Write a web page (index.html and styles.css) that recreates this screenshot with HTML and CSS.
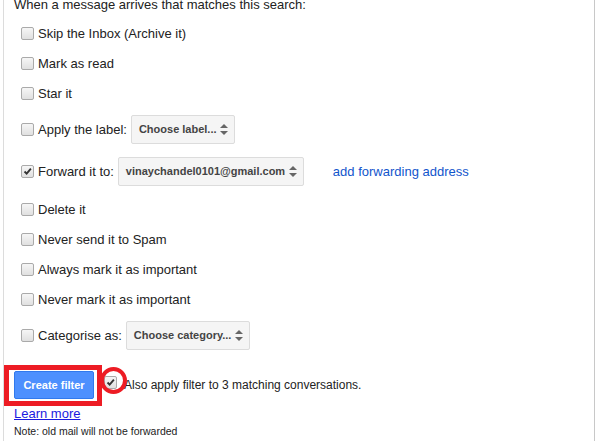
FILE: index.html
```html
<!DOCTYPE html>
<html lang="en">
<head>
    <meta charset="UTF-8">
    <title>Create filter</title>
    <link rel="stylesheet" href="styles.css">
</head>
<body>
<div class="panel">
    <div class="intro">When a message arrives that matches this search:</div>

    <div class="options">
        <div class="row"><span class="box"></span>Skip the Inbox (Archive it)</div>
        <div class="row"><span class="box"></span>Mark as read</div>
        <div class="row"><span class="box"></span>Star it</div>
        <div class="row tall">
            <span class="box"></span>Apply the label:
            <span class="select label-select">Choose label...<span class="arrows"></span></span>
        </div>
        <div class="row tall">
            <span class="box checked"><svg viewBox="0 0 13 13"><path d="M3 6.5 L5.5 9 L10.5 3" /></svg></span>Forward it to:
            <span class="select forward-select">vinaychandel0101@gmail.com<span class="arrows"></span></span>
            <a class="link" href="#">add forwarding address</a>
        </div>
        <div class="row after-tall"><span class="box"></span>Delete it</div>
        <div class="row"><span class="box"></span>Never send it to Spam</div>
        <div class="row"><span class="box"></span>Always mark it as important</div>
        <div class="row"><span class="box"></span>Never mark it as important</div>
        <div class="row tall">
            <span class="box"></span>Categorise as:
            <span class="select category-select">Choose category...<span class="arrows"></span></span>
        </div>
    </div>

    <div class="actions">
        <button class="btn-create">Create filter</button>
        <span class="box checked small-gap"><svg viewBox="0 0 13 13"><path d="M3 6.5 L5.5 9 L10.5 3" /></svg></span>
        <span class="apply-text">Also apply filter to 3 matching conversations.</span>
        <span class="mark-rect"></span>
        <span class="mark-ring"></span>
    </div>

    <a class="learn" href="#">Learn more</a>
    <div class="note">Note: old mail will not be forwarded</div>
</div>
</body>
</html>
```

FILE: styles.css
```css
body {
    margin: 0;
    font-family: "Liberation Sans", Arial, sans-serif;
    font-size: 13px;
    color: #222;
    background: white;
    overflow: hidden;
}

.panel {
    margin-left: 3px;
    border-left: 1px solid #dcdcdc;
    border-right: 1px solid #c8c8c8;
    height: 445px;
    padding-left: 10px;
}

.intro {
    line-height: 18px;
    margin-top: -4px;
    height: 22px;
}

.row {
    display: flex;
    align-items: center;
    height: 30px;
    padding-left: 7px;
}

.row.tall {
    height: 42px;
}

.row.after-tall {
    margin-top: 2px;
}

.box {
    display: inline-block;
    box-sizing: border-box;
    width: 13px;
    height: 13px;
    border: 1px solid #aaa;
    border-radius: 2px;
    background: linear-gradient(#f6f6f6, #e0e0e0);
    margin-right: 4px;
    flex: none;
}

.box svg {
    display: block;
    width: 11px;
    height: 11px;
}

.box svg path {
    fill: none;
    stroke: #333;
    stroke-width: 2.2;
}

.select {
    display: inline-flex;
    align-items: center;
    box-sizing: border-box;
    height: 29px;
    margin-left: 4px;
    padding: 0 0 0 7px;
    background: #f5f5f5;
    border: 1px solid #dcdcdc;
    border-radius: 2px;
    font-size: 11px;
    font-weight: bold;
    color: #444;
    position: relative;
}

.label-select {
    width: 104px;
}

.forward-select {
    width: 186px;
}

.category-select {
    width: 124px;
}

.arrows {
    position: absolute;
    right: 6px;
    top: 8px;
    width: 8px;
    height: 11px;
}

.arrows::before,
.arrows::after {
    content: "";
    position: absolute;
    left: 0;
    border-left: 4px solid transparent;
    border-right: 4px solid transparent;
}

.arrows::before {
    top: 0;
    border-bottom: 4px solid #666;
}

.arrows::after {
    bottom: 0;
    border-top: 4px solid #666;
}

.link {
    margin-left: 29px;
    color: #1155cc;
    text-decoration: none;
}

.actions {
    position: relative;
    display: flex;
    align-items: center;
    margin-top: 15px;
    height: 28px;
}

.btn-create {
    width: 80px;
    height: 28px;
    background: #4d90fe;
    border: 1px solid #3079ed;
    border-radius: 2px;
    color: white;
    font-family: "Liberation Sans", Arial, sans-serif;
    font-size: 11px;
    font-weight: bold;
    padding: 0;
    margin-right: 10px;
}

.small-gap {
    margin-right: 7px;
    position: relative;
    top: -3px;
}

.apply-text {
    font-size: 12px;
}

.mark-rect {
    position: absolute;
    left: -10px;
    top: -6px;
    width: 88px;
    height: 31px;
    border: 5px solid #ed1c24;
}

.mark-ring {
    position: absolute;
    left: 86px;
    top: -4px;
    width: 19px;
    height: 19px;
    border: 4px solid #ed1c24;
    border-radius: 50%;
}

.learn {
    display: block;
    width: max-content;
    margin-top: 7px;
    color: #1a1ae0;
    line-height: 16px;
}

.note {
    font-size: 10.5px;
    margin-top: 3px;
}
```
